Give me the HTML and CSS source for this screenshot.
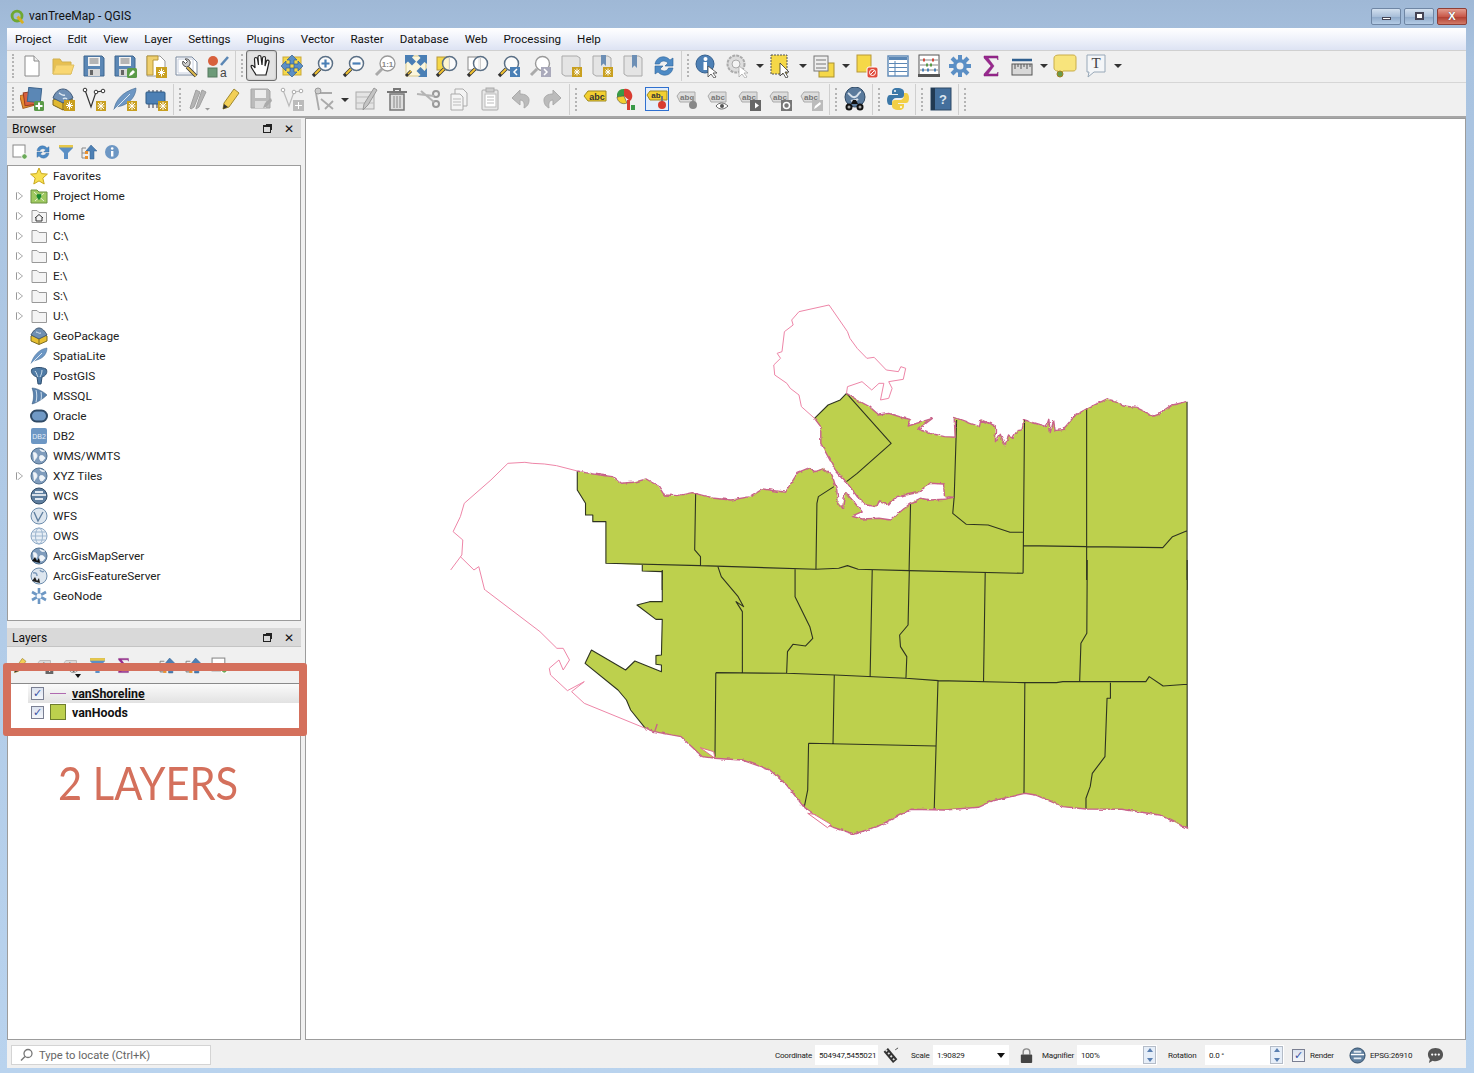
FILE: index.html
```html
<!DOCTYPE html>
<html lang="en">
<head>
<meta charset="utf-8">
<title>vanTreeMap - QGIS</title>
<link rel="stylesheet" href="styles.css">
</head>
<body>
<svg class="defs" width="0" height="0" aria-hidden="true">
<defs>
<filter id="rough" x="-5%" y="-5%" width="110%" height="110%"><feTurbulence type="fractalNoise" baseFrequency=".07" numOctaves="3" seed="4"/><feDisplacementMap in="SourceGraphic" scale="9" xChannelSelector="R" yChannelSelector="G"/></filter>
<symbol id="mag" viewBox="0 0 24 24"><path d="M9 15L2 22" stroke="#333" stroke-width="3.400"/><path d="M9 15L4 20" stroke="#f2c230" stroke-width="2"/><circle cx="14.500" cy="9.500" r="7" fill="#fff" fill-opacity=".75" stroke="#5a6f85" stroke-width="1.500"/></symbol>
<symbol id="new" viewBox="0 0 24 24"><path d="M5 2h9l5 5v15H5z" fill="#fff" stroke="#8a8a8a"/><path d="M14 2v5h5" fill="#eee" stroke="#8a8a8a"/></symbol>
<symbol id="open" viewBox="0 0 24 24"><path d="M2 20V5h7l2 3h9v12z" fill="#e8c050" stroke="#d0b050"/><path d="M2 20l3-9h18l-3 9z" fill="#f9d772" stroke="#e0c060"/></symbol>
<symbol id="save" viewBox="0 0 24 24"><path d="M2 2h18l2 2v18H2z" fill="#5b87b5" stroke="#3f668f"/><rect x="6" y="3" width="12" height="9" fill="#f4f4f4"/><path d="M7.500 5h9M7.500 7h9M7.500 9h9" stroke="#777"/><rect x="6" y="15" width="12" height="7" fill="#d8d8d8"/><rect x="8" y="16" width="3" height="5" fill="#666"/></symbol>
<symbol id="saveas" viewBox="0 0 24 24"><use href="#save"/><rect x="14" y="14" width="10" height="10" rx="1.500" fill="#5a9a48"/><path d="M16 22l1-3 3-3 2 2-3 3z" fill="#fff"/></symbol>
<symbol id="layout" viewBox="0 0 24 24"><path d="M3 2h13l5 5v15H3z" fill="#fff" stroke="#999"/><path d="M3 2h11v4H9v15H3z" fill="#efd070" stroke="#b89838"/><rect x="12" y="13" width="11" height="11" fill="#c9a020"/><path d="M17.500 14.500v8M14 18.500h7M15 16l5 5M20 16l-5 5" stroke="#fff"/></symbol>
<symbol id="mgr" viewBox="0 0 24 24"><path d="M1 3h16l5 5v13H1z" fill="#fff" stroke="#7a8aa0"/><path d="M3 5h15v14H3z" fill="none" stroke="#c8d0e0"/><path d="M21 22l-9-9" stroke="#333" stroke-width="3.500"/><path d="M21 22l-9-9" stroke="#e0bc50" stroke-width="2"/><path d="M14 12a4 4 0 0 1-6-5l2.500 2.500 2-2L10 5a4 4 0 0 1 5 5z" fill="#ccc" stroke="#555"/></symbol>
<symbol id="style" viewBox="0 0 24 24"><circle cx="7" cy="7" r="5" fill="#d8603c"/><rect x="2" y="14" width="9" height="9" fill="#6c9a78" stroke="#54785e"/><path d="M15 11l7-8" stroke="#5b87b5" stroke-width="2.500"/><text x="14" y="23" font-family="Liberation Sans,sans-serif" font-size="12" fill="#444">a</text></symbol>
<symbol id="hand" viewBox="0 0 24 24"><path d="M7 21C5 17 2 14 2 12c1-1.500 3 0 4 2L5.500 5c0-2 2.500-2 3 0l1 6-.5-8c0-2 3-2 3 0l1 8 .5-7c.5-2 3-2 3 0l-.5 8 1.500-5c.5-1.500 3-1 2.500 1l-2 9c-.5 2-1 3-1 4z" fill="#fff" stroke="#222" stroke-width="1.200"/></symbol>
<symbol id="pan" viewBox="0 0 24 24"><rect x="3" y="3" width="18" height="18" fill="#f5d848" stroke="#c9a838"/><path d="M12 1l5 5h-3v4h-4V6H7zM12 23l5-5h-3v-4h-4v4H7zM1 12l5-5v3h4v4H6v3zM23 12l-5-5v3h-4v4h4v3z" fill="#5b8fc5" stroke="#35608f" stroke-width=".7"/></symbol>
<symbol id="zin" viewBox="0 0 24 24"><use href="#mag"/><path d="M10.500 9.500h8M14.500 5.500v8" stroke="#4a7fb5" stroke-width="2.200"/></symbol>
<symbol id="zout" viewBox="0 0 24 24"><use href="#mag"/><path d="M10.500 9.500h8" stroke="#4a7fb5" stroke-width="2.200"/></symbol>
<symbol id="z11" viewBox="0 0 24 24"><path d="M9 15L3 21" stroke="#aaa" stroke-width="3"/><circle cx="14.500" cy="9.500" r="7.500" fill="#fff" stroke="#999" stroke-width="1.300"/><text x="14.500" y="12.500" text-anchor="middle" font-family="Liberation Sans,sans-serif" font-weight="bold" font-size="8" fill="#888">1:1</text></symbol>
<symbol id="zfull" viewBox="0 0 24 24"><rect x="2" y="2" width="20" height="20" fill="#fbf6dc" stroke="#d8c888"/><path d="M1 1h9L8 3.500l4 4-4 4-4-4L1 10zM23 1v9l-2.500-2-4 4-4-4 4-4L14 1zM23 23h-9l2.500-2-4-4 4-4 4 4 2.500-3z" fill="#4a7fb5"/><path d="M7 17l-5 5" stroke="#333" stroke-width="3"/><path d="M7 17l-3 3" stroke="#f2c230" stroke-width="1.500"/></symbol>
<symbol id="zlayer" viewBox="0 0 24 24"><rect x="2" y="3" width="12" height="13" fill="#f5d848" stroke="#b89838"/><use href="#mag"/><path d="M14.500 3v13" stroke="#ccc"/></symbol>
<symbol id="zsel" viewBox="0 0 24 24"><rect x="2" y="3" width="11" height="13" fill="#fff" stroke="#888"/><use href="#mag"/><path d="M14.500 3v13" stroke="#ccc"/></symbol>
<symbol id="zlast" viewBox="0 0 24 24"><use href="#mag"/><rect x="13" y="13" width="10" height="10" fill="#4a7fb5"/><path d="M20 15l-3 3 3 3" fill="none" stroke="#fff" stroke-width="1.500"/></symbol>
<symbol id="znext" viewBox="0 0 24 24"><path d="M9 15L3 21" stroke="#aaa" stroke-width="3"/><circle cx="14.500" cy="9.500" r="7" fill="#fff" stroke="#999" stroke-width="1.400"/><rect x="13" y="13" width="10" height="10" fill="#aab"/><path d="M16 15l3 3-3 3" fill="none" stroke="#fff" stroke-width="1.500"/></symbol>
<symbol id="bm" viewBox="0 0 24 24"><path d="M3 2h15l3 2v18H6l-3-2z" fill="#e4e4e4" stroke="#aaa"/><rect x="13" y="13" width="10" height="10" fill="#c9a020"/><path d="M18 14.500v7M15 18h6M15.500 15.500l5 5M20.500 15.500l-5 5" stroke="#fff"/></symbol>
<symbol id="bm2" viewBox="0 0 24 24"><path d="M3 2h15l3 2v18H6l-3-2z" fill="#e4e4e4" stroke="#aaa"/><path d="M11 1h5v11l-2.500-2.500L11 12z" fill="#6d8fb5"/><rect x="13" y="13" width="10" height="10" fill="#c9a020"/><path d="M18 14.500v7M15 18h6M15.500 15.500l5 5M20.500 15.500l-5 5" stroke="#fff"/></symbol>
<symbol id="bm3" viewBox="0 0 24 24"><path d="M3 2h15l3 2v18H6l-3-2z" fill="#e4e4e4" stroke="#aaa"/><path d="M11 1h5v13l-2.500-2.500L11 14z" fill="#6d8fb5"/></symbol>
<symbol id="refresh" viewBox="0 0 24 24"><path d="M3 10C4 5 8 2 13 3c2.500.5 4 2 5 3l3-2v8h-8l3-3c-2-2.500-7-3-8.500 1z" fill="#4d8ac5" stroke="#2e6399" stroke-width=".6"/><path d="M21 14c-1 5-5 8-10 7-2.500-.5-4-2-5-3l-3 2v-8h8l-3 3c2 2.500 7 3 8.500-1z" fill="#4d8ac5" stroke="#2e6399" stroke-width=".6"/></symbol>
<symbol id="identify" viewBox="0 0 24 24"><circle cx="10" cy="10" r="9" fill="#4d80b5" stroke="#35608f"/><rect x="8.500" y="8" width="3.500" height="8" fill="#fff"/><circle cx="10.500" cy="5" r="2" fill="#fff"/><path d="M13 12v11l3-3 3 4 2-1-3-4h4z" fill="#fff" stroke="#444" stroke-width=".8"/></symbol>
<symbol id="action" viewBox="0 0 24 24"><circle cx="10" cy="10" r="8.500" fill="#ddd" stroke="#aaa" stroke-width="2" stroke-dasharray="3 1"/><circle cx="10" cy="10" r="4" fill="#f4f4f4" stroke="#aaa"/><path d="M13 12v11l3-3 3 4 2-1-3-4h4z" fill="#fff" stroke="#aaa" stroke-width=".8"/></symbol>
<symbol id="select" viewBox="0 0 24 24"><rect x="2" y="1" width="16" height="19" fill="#f5d848" stroke="#555" stroke-dasharray="2 1"/><path d="M11 9v13l3-3 3 5 2-1-3-5h4z" fill="#fff" stroke="#333" stroke-width=".8"/></symbol>
<symbol id="selform" viewBox="0 0 24 24"><rect x="7" y="9" width="15" height="14" fill="#f5d848" stroke="#a89030"/><rect x="2" y="2" width="14" height="15" fill="#eee" stroke="#777"/><path d="M4 6h10M4 10h10M4 14h10" stroke="#777"/></symbol>
<symbol id="desel" viewBox="0 0 24 24"><rect x="2" y="1" width="14" height="17" fill="#f5d848" stroke="#b89838"/><rect x="12" y="13" width="11" height="11" rx="2" fill="#e04b3c" stroke="#fff"/><circle cx="17.500" cy="18.500" r="3" fill="none" stroke="#fff"/><path d="M15.500 20.500l4-4" stroke="#fff"/></symbol>
<symbol id="table" viewBox="0 0 24 24"><rect x="2" y="2" width="20" height="20" fill="#fff" stroke="#5b87b5" stroke-width="1.400"/><path d="M3 4.500h18" stroke="#5b87b5" stroke-width="3"/><path d="M3 9.500h18M3 13.500h18M3 17.500h18M9 7v15" stroke="#5b87b5"/></symbol>
<symbol id="abacus" viewBox="0 0 24 24"><rect x="2" y="1" width="20" height="20" fill="#fff" stroke="#555"/><rect x="1" y="20" width="22" height="3" fill="#555"/><path d="M3 6h18M3 11h18M3 16h18" stroke="#888"/><path d="M6 6h2M15 6h2" stroke="#d04a3c" stroke-width="3"/><path d="M9 11h2M13 11h2" stroke="#5a9a48" stroke-width="3"/><path d="M5 16h2M10 16h2M17 16h2" stroke="#4a7fb5" stroke-width="3"/></symbol>
<symbol id="gear" viewBox="0 0 24 24"><path d="M12 1v22M1 12h22M4 4l16 16M20 4L4 20" stroke="#5b8fc5" stroke-width="4"/><circle cx="12" cy="12" r="7" fill="#5b8fc5"/><circle cx="12" cy="12" r="3.500" fill="#f0f0f0"/></symbol>
<symbol id="sum" viewBox="0 0 24 24"><path d="M19 2H5v2l7 8-7 8v2h14v-4l-1 2H9l6-8-6-8h9l1 2z" fill="#99288f" stroke="#7a1f72" stroke-width=".5"/></symbol>
<symbol id="measure" viewBox="0 0 24 24"><path d="M2 6h20" stroke="#2f5f8f" stroke-width="2.500"/><rect x="2" y="10" width="20" height="11" fill="#d8d8d8" stroke="#555"/><path d="M5 10v5M8 10v3M11 10v5M14 10v3M17 10v5M20 10v3" stroke="#555"/></symbol>
<symbol id="tip" viewBox="0 0 24 24"><path d="M6 1h14c2 0 3 1 3 3v10c0 2-1 3-3 3H10l-4 6-1-6c-2 0-4-1-4-3V4c0-2 2-3 5-3z" fill="#f8e47c" stroke="#c9ad48"/><circle cx="7" cy="20" r="3" fill="#6a9a4a" stroke="#a08020"/></symbol>
<symbol id="tbox" viewBox="0 0 24 24"><path d="M3 1h18v17H10l-6 5 1-5H3z" fill="#f4f6f8" stroke="#98a8b8"/><text x="12" y="14" text-anchor="middle" font-family="Liberation Serif,serif" font-size="15" fill="#444">T</text></symbol>
<symbol id="addlayer" viewBox="0 0 24 24"><rect x="1" y="7" width="13" height="13" transform="rotate(-15 7 13)" fill="#e89030" stroke="#a86020"/><rect x="4" y="5" width="13" height="13" transform="rotate(-8 10 11)" fill="#d86040" stroke="#983a20"/><rect x="8" y="1" width="13" height="14" transform="rotate(6 14 8)" fill="#5b87b5" stroke="#3f668f"/><rect x="14" y="14" width="10" height="10" rx="1.500" fill="#5a9a48"/><path d="M19 15.500v7M15.500 19h7" stroke="#fff" stroke-width="2"/></symbol>
<symbol id="gpkg" viewBox="0 0 24 24"><path d="M12 8l10 5v5l-10 5-10-5v-5z" fill="#e0b830" stroke="#7a6520"/><path d="M2 11c2-6 6-9 10-9s8 3 10 9l-10 5z" fill="#7090b5" stroke="#3f5a7a"/><path d="M8 6c2 1 3 3 6 2M12 12c1-1 3-1 4 0" stroke="#dfe9f3" stroke-width="1.500" fill="none"/><path d="M12 16v7" stroke="#7a6520"/></symbol>
<symbol id="gpkgnew" viewBox="0 0 24 24"><use href="#gpkg"/><rect x="13" y="13" width="11" height="11" fill="#c9a020"/><path d="M18.500 14.500v8M15 18.500h7M16 16l5 5M21 16l-5 5" stroke="#fff"/></symbol>
<symbol id="vnew" viewBox="0 0 24 24"><path d="M3 3l6 17 5-15 7-1" fill="none" stroke="#333" stroke-width="1.200"/><circle cx="3" cy="3" r="1.800" fill="#fff" stroke="#333"/><circle cx="14" cy="5" r="1.800" fill="#fff" stroke="#333"/><circle cx="21" cy="4" r="1.800" fill="#fff" stroke="#333"/><rect x="14" y="14" width="10" height="10" fill="#c9a020"/><path d="M19 15v8M15.500 19h7M16 16l6 6M22 16l-6 6" stroke="#fff"/></symbol>
<symbol id="feather" viewBox="0 0 24 24"><path d="M1 23c1-9 8-18 22-22 0 7-5 15-15 18l-5 1z" fill="#6d97c4" stroke="#3f668f" stroke-width=".6"/><path d="M1 23L17 7" stroke="#dfe9f3"/></symbol>
<symbol id="feathernew" viewBox="0 0 24 24"><use href="#feather"/><rect x="14" y="14" width="10" height="10" fill="#c9a020"/><path d="M19 15v8M15.500 19h7M16 16l6 6M22 16l-6 6" stroke="#fff"/></symbol>
<symbol id="chip" viewBox="0 0 24 24"><path d="M5 3v18M9 3v18M13 3v18M17 3v18" stroke="#334"/><rect x="2" y="5" width="19" height="12" rx="1" fill="#4d80b5" stroke="#2e5a85"/><rect x="14" y="14" width="10" height="10" fill="#c9a020"/><path d="M19 15v8M15.500 19h7M16 16l6 6M22 16l-6 6" stroke="#fff"/></symbol>
<symbol id="dpencils" viewBox="0 0 24 24"><path d="M3 21L9 3l4 2-6 15-3 2zM9 21L15 3l4 2-7 15-3 2z" fill="#b4b4b4" stroke="#a0a0a0"/><path d="M18 21h5l-2.500 2.500z" fill="#999"/></symbol>
<symbol id="pencil" viewBox="0 0 24 24"><path d="M5 22l1-6L16 2l5 4-10 14z" fill="#f2cf55" stroke="#a08a30"/><path d="M5 22l1-5 4 3z" fill="#333"/></symbol>
<symbol id="dsave" viewBox="0 0 24 24"><path d="M2 2h17l2 2v17H2z" fill="#bbb" stroke="#a5a5a5"/><rect x="6" y="3" width="11" height="8" fill="#eee"/><rect x="6" y="14" width="11" height="7" fill="#ddd"/><path d="M14 21l2-5 6-5 1 3-6 6z" fill="#aaa"/></symbol>
<symbol id="dvert" viewBox="0 0 24 24"><path d="M3 3l6 16 5-14 7-1" fill="none" stroke="#bbb" stroke-width="1.200"/><circle cx="3" cy="3" r="1.800" fill="#fff" stroke="#aaa"/><circle cx="14" cy="5" r="1.800" fill="#fff" stroke="#aaa"/><circle cx="21" cy="4" r="1.800" fill="#fff" stroke="#aaa"/><rect x="13" y="13" width="11" height="11" fill="#bbb"/><path d="M18.500 15v7M15 18.500h7" stroke="#fff"/></symbol>
<symbol id="dtools" viewBox="0 0 24 24"><path d="M5 6l3 17M8 6l13 0M10 12l12 10M14 22l8-8" stroke="#aaa" stroke-width="1.800" fill="none"/><circle cx="7" cy="4" r="3" fill="#ccc" stroke="#999"/></symbol>
<symbol id="dedit" viewBox="0 0 24 24"><rect x="2" y="5" width="18" height="17" fill="#e4e4e4" stroke="#aaa"/><path d="M2 10h18M2 16h18" stroke="#bbb"/><path d="M9 23l1-6L20 1l3 2-9 15z" fill="#c4c4c4" stroke="#999"/></symbol>
<symbol id="trash" viewBox="0 0 24 24"><path d="M2 5h20M9 5V2h6v3" stroke="#777" stroke-width="2" fill="none"/><path d="M5 7h14v16H5z" fill="#ddd" stroke="#777" stroke-width="1.500"/><path d="M9 9v12M12 9v12M15 9v12" stroke="#888"/></symbol>
<symbol id="cut" viewBox="0 0 24 24"><circle cx="20" cy="7" r="3" fill="none" stroke="#999" stroke-width="2"/><circle cx="20" cy="17" r="3" fill="none" stroke="#999" stroke-width="2"/><path d="M18 9L1 7M18 15L5 4" stroke="#b4b4b4" stroke-width="2"/></symbol>
<symbol id="copy" viewBox="0 0 24 24"><path d="M8 2h8l4 4v13H8z" fill="#f4f4f4" stroke="#aaa"/><path d="M4 7h9l3 3v13H4z" fill="#f4f4f4" stroke="#aaa"/><path d="M6 12h8M6 15h8M6 18h8" stroke="#bbb"/></symbol>
<symbol id="paste" viewBox="0 0 24 24"><rect x="4" y="3" width="16" height="20" rx="1" fill="#e8e8e8" stroke="#aaa"/><rect x="8" y="1" width="8" height="4" fill="#ccc" stroke="#aaa"/><rect x="7" y="7" width="11" height="13" fill="#fff" stroke="#bbb"/><path d="M9 10h7M9 13h7M9 16h7" stroke="#bbb"/></symbol>
<symbol id="undo" viewBox="0 0 24 24"><path d="M11 3L3 11l8 7v-5c3 0 5 2 4 8 4-2 5-5 5-8 0-4-4-6-9-6z" fill="#bbb" stroke="#aaa"/></symbol>
<symbol id="redo" viewBox="0 0 24 24"><path d="M13 3l8 8-8 7v-5c-3 0-5 2-4 8-4-2-5-5-5-8 0-4 4-6 9-6z" fill="#bbb" stroke="#aaa"/></symbol>
<symbol id="abc" viewBox="0 0 24 24"><path d="M1 9l4-5h18v10H5z" fill="#f2cf30" stroke="#a08a20"/><text x="14" y="12.500" text-anchor="middle" font-family="Liberation Sans,sans-serif" font-weight="bold" font-size="9" fill="#333">abc</text></symbol>
<symbol id="labpie" viewBox="0 0 24 24"><path d="M10 2a7 7 0 0 1 6 12L10 9z" fill="#d83c30"/><path d="M3 7a7 7 0 0 1 7-5v7l-7 1z" fill="#3a9a48"/><path d="M3 10l7-1 3 7a7 7 0 0 1-10-6z" fill="#f2cf30" stroke="#333" stroke-width=".5"/><rect x="13" y="13" width="3" height="10" fill="#d83c30"/><rect x="17" y="18" width="4" height="5" fill="#3a9a48"/></symbol>
<symbol id="labpin" viewBox="0 0 24 24"><rect x=".5" y=".5" width="23" height="23" fill="#e4eefa" stroke="#2f70d0"/><path d="M2 8l3-4h17v9H5z" fill="#f2cf30" stroke="#a08a20"/><text x="11" y="11" text-anchor="middle" font-family="Liberation Sans,sans-serif" font-weight="bold" font-size="8" fill="#333">ab</text><path d="M17 9v7" stroke="#777" stroke-width="2"/><circle cx="17" cy="18" r="4" fill="#d83c30"/></symbol>
<symbol id="gtag" viewBox="0 0 24 24"><path d="M1 9l3-4h15v10H4z" fill="#ddd" stroke="#aaa"/><text x="11" y="13" text-anchor="middle" font-family="Liberation Sans,sans-serif" font-weight="bold" font-size="8" fill="#777">abc</text></symbol>
<symbol id="lab1" viewBox="0 0 24 24"><use href="#gtag"/><path d="M17 9v7" stroke="#999" stroke-width="2"/><circle cx="17" cy="18" r="4" fill="#888"/></symbol>
<symbol id="lab2" viewBox="0 0 24 24"><use href="#gtag"/><path d="M9 19c3-4 8-4 12 0-4 4-9 4-12 0z" fill="#fff" stroke="#666"/><circle cx="15" cy="19" r="2" fill="#555"/></symbol>
<symbol id="lab3" viewBox="0 0 24 24"><use href="#gtag"/><rect x="12" y="13" width="11" height="11" fill="#666"/><path d="M14 18.500h3v-3l4 3-4 3v-3" fill="#fff"/></symbol>
<symbol id="lab4" viewBox="0 0 24 24"><use href="#gtag"/><rect x="12" y="13" width="11" height="11" fill="#777"/><circle cx="17.500" cy="18.500" r="3" fill="none" stroke="#fff" stroke-width="1.500"/></symbol>
<symbol id="lab5" viewBox="0 0 24 24"><use href="#gtag"/><rect x="12" y="13" width="11" height="11" fill="#bbb"/><path d="M14 22l1-3 5-4 1 2-5 4z" fill="#fff"/></symbol>
<symbol id="plugin" viewBox="0 0 24 24"><circle cx="12" cy="10" r="10" fill="#5a7a9c" stroke="#2f4a66"/><path d="M5 6c3 2 3 5 7 4s3-5 6-5M8 14c2-1 5 0 7-2" stroke="#d8e2ec" stroke-width="2" fill="none"/><circle cx="6" cy="20" r="3.500" fill="#111"/><circle cx="17" cy="20" r="3.500" fill="#111"/><path d="M8 17h7l-2-4h-3z" fill="#111"/><circle cx="6" cy="20" r="1.500" fill="#aaa"/><circle cx="17" cy="20" r="1.500" fill="#aaa"/></symbol>
<symbol id="python" viewBox="0 0 24 24"><path d="M11 1c-4 0-5 2-5 4v2h6v1H4c-2 0-3 2-3 5s1 5 3 5h2v-3c0-2 2-4 4-4h5c2 0 3-1 3-3V5c0-2-2-4-7-4z" fill="#3c78a8"/><circle cx="9" cy="4" r="1" fill="#fff"/><path d="M13 23c4 0 5-2 5-4v-2h-6v-1h8c2 0 3-2 3-5s-1-5-3-5h-2v3c0 2-2 4-4 4h-5c-2 0-3 1-3 3v3c0 2 2 4 7 4z" fill="#f2cf45"/><circle cx="15" cy="20" r="1" fill="#fff"/></symbol>
<symbol id="help" viewBox="0 0 24 24"><rect x="2" y="1" width="20" height="22" fill="#446f9c" stroke="#2f4a66"/><rect x="2" y="1" width="4" height="22" fill="#223a52"/><text x="14" y="17" text-anchor="middle" font-family="Liberation Sans,sans-serif" font-weight="bold" font-size="13" fill="#dce6f0">?</text></symbol>
<symbol id="badd" viewBox="0 0 16 16"><rect x="1" y="1" width="12" height="12" fill="#fff" stroke="#888"/><circle cx="12.500" cy="12.500" r="2.800" fill="#6aaa58" stroke="#fff"/></symbol>
<symbol id="bfilter" viewBox="0 0 16 16"><path d="M1 1h14v3L10 9v6H6V9L1 4z" fill="#5b8fc5"/><path d="M1 1h14v2.500H1z" fill="#e8c84a"/></symbol>
<symbol id="bcoll" viewBox="0 0 16 16"><path d="M9 1l6 6h-3v8H8V7H4z" fill="#4d80b5" stroke="#35608f" stroke-width=".5" transform="translate(1)"/><path d="M1 4h4M1 4v10M1 9h4M1 14h4" stroke="#888"/><rect x="4" y="7" width="3" height="3" fill="#e89030"/><rect x="4" y="12" width="3" height="3" fill="#e89030"/></symbol>
<symbol id="binfo" viewBox="0 0 16 16"><circle cx="8" cy="8" r="7" fill="#6d97c4"/><rect x="7" y="7" width="2.400" height="5.500" fill="#fff"/><circle cx="8.200" cy="4.500" r="1.300" fill="#fff"/></symbol>
<symbol id="star" viewBox="0 0 18 18"><path d="M9 1l2.400 5.600 6 .5-4.600 4 1.400 5.900L9 13.900 3.800 17l1.400-5.900-4.600-4 6-.5z" fill="#f8e050" stroke="#c9a820"/></symbol>
<symbol id="phome" viewBox="0 0 18 18"><path d="M1 3h6l2 2h8v11H1z" fill="#9ec860" stroke="#6a9040"/><path d="M4 5l10 9M14 6L5 14" stroke="#e8f0d0"/><path d="M9 13c-3-3-3-6-1-6 .6 0 1 .4 1 1 0-.6.500-1 1-1 2 0 2 3-1 6z" fill="#1a8a30"/></symbol>
<symbol id="folder" viewBox="0 0 18 18"><path d="M2 3.500h5l2 2h7.500v10H2z" fill="#f4f4f4" stroke="#999"/></symbol>
<symbol id="fhome" viewBox="0 0 18 18"><use href="#folder"/><path d="M5 11l4-3.500 4 3.500M6 10.500v3.500h6v-3.500" fill="none" stroke="#333"/></symbol>
<symbol id="tgpkg" viewBox="0 0 18 18"><path d="M9 6l8 3v5l-8 3.500L1 14V9z" fill="#e8c030" stroke="#7a6a20"/><path d="M1 8c2-4 5-7 8-7s6 3 8 7l-8 4z" fill="#6f8fb2" stroke="#40566f"/><path d="M6 5c2 0 3 2 5 1" stroke="#dfe9f3" fill="none"/><path d="M9 12v5" stroke="#7a6a20"/></symbol>
<symbol id="spatial" viewBox="0 0 18 18"><path d="M1 17C3 9 9 2 17 1c0 5-3 10-10 12l-3 1z" fill="#6d97c4" stroke="#40668f" stroke-width=".5"/><path d="M1 17L12 6" stroke="#dfe9f3"/></symbol>
<symbol id="postgis" viewBox="0 0 18 18"><path d="M2 2c4-2 10-2 14 0 2 3 0 7-4 8l-1 7H8L7 10C3 9 0 5 2 2z" fill="#4f7ba5" stroke="#2f4f70"/><path d="M5 4c2 2 2 5 3 6M12 3c0 3-1 5-2 7" stroke="#cfe0ee" fill="none"/></symbol>
<symbol id="mssql" viewBox="0 0 18 18"><path d="M2 1c5 0 12 4 15 7-3 3-10 8-15 9 2-5 2-11 0-16z" fill="#5a82ad" stroke="#37587a" stroke-width=".5"/><path d="M6 3c1 4 1 8 0 12M11 5c.5 3 .5 5 0 8" stroke="#cfe0ee" fill="none"/></symbol>
<symbol id="oracle" viewBox="0 0 18 18"><rect x="1" y="3.500" width="16" height="11" rx="5.500" fill="#7099c5" stroke="#2f4a66" stroke-width="2"/></symbol>
<symbol id="db2" viewBox="0 0 18 18"><rect x="1" y="1" width="16" height="16" rx="2" fill="#6d97c4"/><text x="9" y="12" text-anchor="middle" font-family="Liberation Sans,sans-serif" font-size="7" fill="#e6eef6">DB2</text></symbol>
<symbol id="globe" viewBox="0 0 18 18"><circle cx="9" cy="9" r="8" fill="#7f9cbc" stroke="#51708f"/><path d="M3 6c3-1 4 1 4 3s-2 3-3 5M10 2c0 2 3 3 5 2M10 9c2-1 4 0 5 2-1 2-3 3-4 3-1-1-2-3-1-5z" fill="#f0f4f8" stroke="#f0f4f8"/></symbol>
<symbol id="wcs" viewBox="0 0 18 18"><circle cx="9" cy="9" r="8" fill="#5f7f9f" stroke="#2f4a66"/><path d="M2 8h14" stroke="#fff" stroke-width="1.500"/><path d="M5 5h8M5 12h8" stroke="#e0e8f0" stroke-width="2"/></symbol>
<symbol id="wfs" viewBox="0 0 18 18"><circle cx="9" cy="9" r="8" fill="#dde6ef" stroke="#6d8dad"/><path d="M4 5l4 9 5-9" fill="none" stroke="#5f7f9f" stroke-width="1.400"/></symbol>
<symbol id="ows" viewBox="0 0 18 18"><circle cx="9" cy="9" r="8" fill="#e8eff6" stroke="#8ba7c4"/><ellipse cx="9" cy="9" rx="3.500" ry="8" fill="none" stroke="#9db6cf"/><path d="M1 9h16M2.500 5h13M2.500 13h13" stroke="#9db6cf"/></symbol>
<symbol id="arcmap" viewBox="0 0 18 18"><use href="#globe"/><path d="M2 14l3-4 2 4 2-3 1 5z" fill="#111"/></symbol>
<symbol id="arcfeat" viewBox="0 0 18 18"><circle cx="9" cy="9" r="8" fill="#dde6ef" stroke="#6d8dad"/><path d="M3 6c3-1 4 1 4 3M10 3c1 2 3 2 4 1" stroke="#7f9cbc" stroke-width="1.500" fill="none"/><path d="M2 14l3-4 2 4 2-3 1 5z" fill="#222"/></symbol>
<symbol id="geonode" viewBox="0 0 18 18"><path d="M9 1v16M2 5l14 8M16 5L2 13" stroke="#6d97c4" stroke-width="2.600"/><circle cx="9" cy="9" r="2.500" fill="#f4f8fc"/></symbol>
<symbol id="beetle" viewBox="0 0 18 18"><path d="M4 3l10 12" stroke="#333" stroke-width="6"/><path d="M4 3l10 12" stroke="#ddd" stroke-width="2" stroke-dasharray="2 2"/><path d="M14 3l3-2" stroke="#444"/></symbol>
<symbol id="lock" viewBox="0 0 18 18"><path d="M5.500 8V5c0-4 7-4 7 0v3" fill="none" stroke="#888" stroke-width="1.500"/><rect x="3" y="8" width="12" height="9" rx="1" fill="#444"/></symbol>
<symbol id="chat" viewBox="0 0 18 18"><path d="M9 1c5 0 8 3 8 7s-3 7-8 7c-1 0-2 0-3-.5L2 17l1-4C2 12 1 10 1 8c0-4 3-7 8-7z" fill="#555"/><circle cx="5.500" cy="8" r="1.200" fill="#fff"/><circle cx="9" cy="8" r="1.200" fill="#fff"/><circle cx="12.500" cy="8" r="1.200" fill="#fff"/></symbol>
<symbol id="qlogo" viewBox="0 0 16 16"><circle cx="7.500" cy="7.500" r="5.300" fill="none" stroke="#6fa832" stroke-width="3"/><path d="M8 8l6 7" stroke="#d8b020" stroke-width="3"/></symbol>
<symbol id="search" viewBox="0 0 14 14"><circle cx="8" cy="5.500" r="4" fill="none" stroke="#777" stroke-width="1.300"/><path d="M5 8.500l-4 4" stroke="#777" stroke-width="1.500"/></symbol>
</defs>
</svg>

<div class="win">
  <header class="titlebar">
    <svg class="qlogo"><use href="#qlogo"/></svg>
    <span class="title-text">vanTreeMap - QGIS</span>
    <div class="winbtns">
      <span class="wb"><i class="wb-min"></i></span>
      <span class="wb"><i class="wb-max"></i></span>
      <span class="wb wb-close">X</span>
    </div>
  </header>

  <div class="client">
    <nav class="menubar">
      <span>Project</span><span>Edit</span><span>View</span><span>Layer</span><span>Settings</span><span>Plugins</span><span>Vector</span><span>Raster</span><span>Database</span><span>Web</span><span>Processing</span><span>Help</span>
    </nav>

    <div class="toolrow row-one">
      <i class="grip"></i>
      <span class="tb"><svg class="ic"><use href="#new"/></svg></span>
      <span class="tb"><svg class="ic"><use href="#open"/></svg></span>
      <span class="tb"><svg class="ic"><use href="#save"/></svg></span>
      <span class="tb"><svg class="ic"><use href="#saveas"/></svg></span>
      <span class="tb"><svg class="ic"><use href="#layout"/></svg></span>
      <span class="tb"><svg class="ic"><use href="#mgr"/></svg></span>
      <span class="tb"><svg class="ic"><use href="#style"/></svg></span>
      <i class="sep"></i>
      <span class="tb tb-on"><svg class="ic"><use href="#hand"/></svg></span>
      <span class="tb"><svg class="ic"><use href="#pan"/></svg></span>
      <span class="tb"><svg class="ic"><use href="#zin"/></svg></span>
      <span class="tb"><svg class="ic"><use href="#zout"/></svg></span>
      <span class="tb"><svg class="ic"><use href="#z11"/></svg></span>
      <span class="tb"><svg class="ic"><use href="#zfull"/></svg></span>
      <span class="tb"><svg class="ic"><use href="#zlayer"/></svg></span>
      <span class="tb"><svg class="ic"><use href="#zsel"/></svg></span>
      <span class="tb"><svg class="ic"><use href="#zlast"/></svg></span>
      <span class="tb"><svg class="ic"><use href="#znext"/></svg></span>
      <span class="tb"><svg class="ic"><use href="#bm"/></svg></span>
      <span class="tb"><svg class="ic"><use href="#bm2"/></svg></span>
      <span class="tb"><svg class="ic"><use href="#bm3"/></svg></span>
      <span class="tb"><svg class="ic"><use href="#refresh"/></svg></span>
      <i class="sep"></i>
      <span class="tb"><svg class="ic"><use href="#identify"/></svg></span>
      <span class="tb"><svg class="ic"><use href="#action"/></svg></span><i class="drop"></i>
      <span class="tb"><svg class="ic"><use href="#select"/></svg></span><i class="drop"></i>
      <span class="tb"><svg class="ic"><use href="#selform"/></svg></span><i class="drop"></i>
      <span class="tb"><svg class="ic"><use href="#desel"/></svg></span>
      <span class="tb"><svg class="ic"><use href="#table"/></svg></span>
      <span class="tb"><svg class="ic"><use href="#abacus"/></svg></span>
      <span class="tb"><svg class="ic"><use href="#gear"/></svg></span>
      <span class="tb"><svg class="ic"><use href="#sum"/></svg></span>
      <span class="tb"><svg class="ic"><use href="#measure"/></svg></span><i class="drop"></i>
      <span class="tb"><svg class="ic"><use href="#tip"/></svg></span>
      <span class="tb"><svg class="ic"><use href="#tbox"/></svg></span><i class="drop"></i>
    </div>

    <div class="toolrow row-two">
      <i class="grip"></i>
      <span class="tb"><svg class="ic"><use href="#addlayer"/></svg></span>
      <span class="tb"><svg class="ic"><use href="#gpkgnew"/></svg></span>
      <span class="tb"><svg class="ic"><use href="#vnew"/></svg></span>
      <span class="tb"><svg class="ic"><use href="#feathernew"/></svg></span>
      <span class="tb"><svg class="ic"><use href="#chip"/></svg></span>
      <i class="sep"></i>
      <span class="tb"><svg class="ic"><use href="#dpencils"/></svg></span>
      <span class="tb"><svg class="ic"><use href="#pencil"/></svg></span>
      <span class="tb"><svg class="ic"><use href="#dsave"/></svg></span>
      <span class="tb"><svg class="ic"><use href="#dvert"/></svg></span>
      <span class="tb"><svg class="ic"><use href="#dtools"/></svg></span><i class="drop"></i>
      <span class="tb"><svg class="ic"><use href="#dedit"/></svg></span>
      <span class="tb"><svg class="ic"><use href="#trash"/></svg></span>
      <span class="tb"><svg class="ic"><use href="#cut"/></svg></span>
      <span class="tb"><svg class="ic"><use href="#copy"/></svg></span>
      <span class="tb"><svg class="ic"><use href="#paste"/></svg></span>
      <span class="tb"><svg class="ic"><use href="#undo"/></svg></span>
      <span class="tb"><svg class="ic"><use href="#redo"/></svg></span>
      <i class="sep"></i>
      <span class="tb"><svg class="ic"><use href="#abc"/></svg></span>
      <span class="tb"><svg class="ic"><use href="#labpie"/></svg></span>
      <span class="tb"><svg class="ic"><use href="#labpin"/></svg></span>
      <span class="tb"><svg class="ic"><use href="#lab1"/></svg></span>
      <span class="tb"><svg class="ic"><use href="#lab2"/></svg></span>
      <span class="tb"><svg class="ic"><use href="#lab3"/></svg></span>
      <span class="tb"><svg class="ic"><use href="#lab4"/></svg></span>
      <span class="tb"><svg class="ic"><use href="#lab5"/></svg></span>
      <i class="sep"></i>
      <span class="tb"><svg class="ic"><use href="#plugin"/></svg></span>
      <i class="sep"></i>
      <span class="tb"><svg class="ic"><use href="#python"/></svg></span>
      <i class="sep"></i>
      <span class="tb"><svg class="ic"><use href="#help"/></svg></span>
      <i class="sep"></i>
    </div>

    <main class="workspace">
      <aside class="docks">
        <section class="dock dock-browser">
          <div class="dock-title"><span>Browser</span><span class="dock-btns"><i class="dk-float"></i><b>✕</b></span></div>
          <div class="dock-tools">
            <svg class="bi"><use href="#badd"/></svg>
            <svg class="bi"><use href="#refresh"/></svg>
            <svg class="bi"><use href="#bfilter"/></svg>
            <svg class="bi"><use href="#bcoll"/></svg>
            <svg class="bi"><use href="#binfo"/></svg>
          </div>
          <ul class="tree">
            <li><i class="tw tw-none"></i><svg class="ti"><use href="#star"/></svg>Favorites</li>
            <li><i class="tw"></i><svg class="ti"><use href="#phome"/></svg>Project Home</li>
            <li><i class="tw"></i><svg class="ti"><use href="#fhome"/></svg>Home</li>
            <li><i class="tw"></i><svg class="ti"><use href="#folder"/></svg>C:\</li>
            <li><i class="tw"></i><svg class="ti"><use href="#folder"/></svg>D:\</li>
            <li><i class="tw"></i><svg class="ti"><use href="#folder"/></svg>E:\</li>
            <li><i class="tw"></i><svg class="ti"><use href="#folder"/></svg>S:\</li>
            <li><i class="tw"></i><svg class="ti"><use href="#folder"/></svg>U:\</li>
            <li><i class="tw tw-none"></i><svg class="ti"><use href="#tgpkg"/></svg>GeoPackage</li>
            <li><i class="tw tw-none"></i><svg class="ti"><use href="#spatial"/></svg>SpatiaLite</li>
            <li><i class="tw tw-none"></i><svg class="ti"><use href="#postgis"/></svg>PostGIS</li>
            <li><i class="tw tw-none"></i><svg class="ti"><use href="#mssql"/></svg>MSSQL</li>
            <li><i class="tw tw-none"></i><svg class="ti"><use href="#oracle"/></svg>Oracle</li>
            <li><i class="tw tw-none"></i><svg class="ti"><use href="#db2"/></svg>DB2</li>
            <li><i class="tw tw-none"></i><svg class="ti"><use href="#globe"/></svg>WMS/WMTS</li>
            <li><i class="tw"></i><svg class="ti"><use href="#globe"/></svg>XYZ Tiles</li>
            <li><i class="tw tw-none"></i><svg class="ti"><use href="#wcs"/></svg>WCS</li>
            <li><i class="tw tw-none"></i><svg class="ti"><use href="#wfs"/></svg>WFS</li>
            <li><i class="tw tw-none"></i><svg class="ti"><use href="#ows"/></svg>OWS</li>
            <li><i class="tw tw-none"></i><svg class="ti"><use href="#arcmap"/></svg>ArcGisMapServer</li>
            <li><i class="tw tw-none"></i><svg class="ti"><use href="#arcfeat"/></svg>ArcGisFeatureServer</li>
            <li><i class="tw tw-none"></i><svg class="ti"><use href="#geonode"/></svg>GeoNode</li>
          </ul>
        </section>

        <section class="dock dock-layers">
          <div class="dock-title"><span>Layers</span><span class="dock-btns"><i class="dk-float"></i><b>✕</b></span></div>
          <div class="layer-tools">
            <svg class="li"><use href="#pencil"/></svg>
            <svg class="li"><use href="#lab3"/></svg>
            <svg class="li"><use href="#lab2"/></svg>
            <svg class="li"><use href="#bfilter"/></svg>
            <svg class="li li-s"><use href="#sum"/></svg>
            <svg class="li li-gap"><use href="#bcoll"/></svg>
            <svg class="li"><use href="#bcoll"/></svg>
            <svg class="li"><use href="#badd"/></svg>
            <i class="vis-drop"></i>
          </div>
          <div class="layer-list">
            <div class="layer layer-active"><i class="chk">✓</i><i class="sym-line"></i><span>vanShoreline</span></div>
            <div class="layer"><i class="chk">✓</i><i class="sym-fill"></i><span>vanHoods</span></div>
          </div>
          <div class="big-note">2 LAYERS</div>
        </section>
        <div class="callout"></div>
      </aside>

      <section class="canvas">
        <svg class="mapsvg" viewBox="306 119 1159 920" width="1159" height="920" role="img" aria-label="Map of Vancouver neighbourhoods">
          <g transform="translate(440 300) scale(.4851 .3333)">
            <path class="hood" d="M283 513L300 518 330 525 355 530 372 550 400 547 425 537 450 558 462 585 490 587 520 578 565 595 600 600 640 590 665 567 712 577 738 517 762 503 772 515 790 505 808 525 818 570 820 605 830 625 835 575 850 600 870 635 850 648 870 657 905 655 930 660 945 640 970 610 990 595 1010 600 1040 598 1058 592 1040 590 1038 552 1010 550 985 578 960 585 940 590 925 615 905 605 900 620 880 615 860 590 840 550 815 510 785 430 785 380 772 355 800 315 825 300 838 280 860 300 885 320 905 345 925 340 970 360 965 378 1015 355 985 388 1010 400 1040 410 1062 412 1060 352 1112 380 1115 360 1145 378 1145 425 1155 403 1165 437 1172 405 1180 415 1190 392 1200 390 1203 360 1250 380 1255 358 1258 398 1265 362 1268 392 1285 388 1310 345 1335 325 1375 297 1395 305 1410 318 1435 322 1470 348 1485 340 1510 315 1540 305L1540 870 458 870 458 815 417 813 417 795 342 790 342 665 315 665 315 645 300 645 300 610 283 570Z"/>
            <path class="bnd" d="M772 355L800 315 825 300 838 280M283 513L283 570 300 610 300 645 315 645 315 665 342 665 342 790 537 797 775 808 822 805 840 797 862 808 967 812 1202 820M417 795L417 813 458 815 458 870M527 580L525 750 537 770 537 797M812 560L780 590 777 610 775 808M970 612L967 810M1065 360L1060 590 1057 640 1085 673 1130 675 1175 697 1202 697M1205 360L1202 820M1333 325L1333 870M1203 737L1333 740 1490 743 1510 710 1540 692M1540 305L1540 870M838 280L930 430 860 520 838 545"/>
            <g class="rough">
            <path class="coast" d="M283 513L300 518 330 525 355 530 372 550 400 547 425 537 450 558 462 585 490 587 520 578 565 595 600 600 640 590 665 567 712 577 738 517 762 503 772 515 790 505 808 525 818 570 820 605 830 625 835 575 850 600 870 635 850 648 870 657 905 655 930 660 945 640 970 610 990 595 1010 600 1040 598 1058 592 1040 590 1038 552 1010 550 985 578 960 585 940 590 925 615 905 605 900 620 880 615 860 590 840 550 815 510 785 430 785 380 772 355M838 280L860 300 885 320 905 345 925 340 970 360 965 378 1015 355 985 388 1010 400 1040 410 1062 412 1060 352 1112 380 1115 360 1145 378 1145 425 1155 403 1165 437 1172 405 1180 415 1190 392 1200 390 1203 360 1250 380 1255 358 1258 398 1265 362 1268 392 1285 388 1310 345 1335 325 1375 297 1395 305 1410 318 1435 322 1470 348 1485 340 1510 315 1540 305"/>
            </g>
            <path class="shore" d="M838 280L840 260 870 245 890 270 905 250 915 250 908 300 925 295 932 265 925 245 955 238 960 205 950 200 945 215 920 210 895 172 880 175 860 145 845 115 840 95 802 15 740 35 725 60 728 75 710 95 705 155 695 160 702 175 688 195 690 225 715 250 722 265 740 285 745 320 772 355M283 513L240 497 215 492 190 490 175 487 140 490 105 540 50 610 42 650 27 695 47 720 45 765 22 810M42 770L70 810 80 800 92 870"/>
          </g>
          <g transform="translate(540 560) scale(.4216 .3333)">
            <path class="hood" d="M290 60L290 125 260 125 230 135 275 178 290 178 288 285 275 287 275 313 288 315 288 335 225 303 203 330 122 270 107 310 185 390 205 420 215 450 250 505 270 515 335 530 385 590 415 595 440 597 480 600 545 630 585 675 625 740 690 800 745 822 800 800 880 748 960 750 1040 742 1075 722 1150 700 1175 705 1240 740 1295 747 1380 748 1470 765 1535 805 1535 60Z"/>
            <path class="bnd" d="M290 30L290 125 260 125 230 135 275 178 290 178 288 285 275 287 275 313 288 315 288 335 225 303 203 330 122 270 107 310 185 390 205 420 215 450 250 505M422 20L430 50 470 110 483 140 465 125 480 155 480 338M605 28L605 110 640 200 647 235 630 258 600 253 587 275 585 340M788 30L783 350M876 30L873 195 853 225 855 260 870 290 868 355M1056 38L1052 365M1298 0L1297 220 1283 250 1280 365M417 338L585 340 700 345 868 355 945 362 1150 368 1225 368 1240 365 1437 365 1445 350 1478 378 1535 373M417 338L415 590M698 345L695 552M637 550L940 558M944 362L935 750M637 550L635 690 627 740M1150 368L1148 700M1353 368L1353 415 1345 415 1340 590 1310 640 1305 680 1295 715 1295 747M1535 0L1535 805"/>
            <path class="coast" d="M278 492L272 515"/>
            <path class="isle" d="M380 563L415 595 412 575Z"/>
            <g class="rough">
            <path class="coast" d="M250 505L270 515 335 530 385 590 415 595 440 597 480 600 545 630 585 675 625 740 690 800 745 822 800 800 880 748 960 750 1040 742 1075 722 1150 700 1175 705 1240 740 1295 747 1380 748 1470 765 1535 805"/>
            </g>
            <path class="shore" d="M-130 90L0 215 40 265 55 265 70 300 55 330 45 300 22 325 25 345 65 392 105 365 75 395 105 430 250 505"/>
            <path class="isle" d="M635 760L682 803 690 793 650 763Z"/>
          </g>
        </svg>
      </section>
    </main>

    <footer class="statusbar">
      <div class="locator"><svg class="search"><use href="#search"/></svg><span>Type to locate (Ctrl+K)</span></div>
      <span class="st st-coord">Coordinate</span>
      <span class="field f-coord">504947,5455021</span>
      <svg class="si si-beetle"><use href="#beetle"/></svg>
      <span class="st st-scale">Scale</span>
      <span class="field f-scale">1:90829<i class="combo"></i></span>
      <svg class="si si-lock"><use href="#lock"/></svg>
      <span class="st st-mag">Magnifier</span>
      <span class="field f-mag">100%<i class="spin"></i></span>
      <span class="st st-rot">Rotation</span>
      <span class="field f-rot">0.0 °<i class="spin"></i></span>
      <i class="chk chk-render">✓</i>
      <span class="st st-render">Render</span>
      <svg class="si si-globe"><use href="#wcs"/></svg>
      <span class="st st-epsg">EPSG:26910</span>
      <svg class="si si-chat"><use href="#chat"/></svg>
    </footer>
  </div>
</div>
</body>
</html>
```

FILE: styles.css
```css
* { box-sizing: border-box; }
html, body { margin: 0; padding: 0; }
body { font-family: Roboto, "Open Sans", sans-serif; color: #111; }
.defs { position: absolute; }
i { font-style: normal; }

.win {
  width: 1474px; height: 1073px; overflow: hidden;
  display: flex; flex-direction: column;
  background: linear-gradient(#9fb8d6 0, #a9c3e0 60px, #b9d3ee 100%);
}

.titlebar { height: 28px; flex: none; display: flex; align-items: center; padding: 4px 7px 0 10px; font-size: 12px; color: #111; }
.qlogo { width: 15px; height: 15px; margin-right: 4px; }
.title-text { line-height: 16px; }
.winbtns { margin-left: auto; display: flex; gap: 3px; }
.wb {
  width: 30px; height: 17px; border: 1px solid #6f86a4; border-radius: 2px;
  background: linear-gradient(#d3e0ef, #a9bfd9 50%, #8ea9c9 52%, #b5cce5);
  display: flex; align-items: center; justify-content: center;
}
.wb-min { width: 9px; height: 3px; background: #fff; border: 1px solid #445; margin-top: 5px; }
.wb-max { width: 9px; height: 8px; background: #fff; border: 2px solid #445; }
.wb-close {
  background: linear-gradient(#e39c8e, #c9594a 50%, #b03d2f 52%, #d27a68);
  border-color: #8f3f36; color: #fff; font: bold 11px "Liberation Sans", sans-serif;
  text-shadow: 0 0 1px #333;
}

.client { flex: 1; margin: 0 8px 5px 7px; display: flex; flex-direction: column; background: #f0f0f0; min-height: 0; }

.menubar {
  height: 23px; flex: none; display: flex; align-items: center; padding-left: 8px; gap: 16px;
  font-size: 11.600px; color: #111;
  background: linear-gradient(#fff 0, #f4f6fc 35%, #dde3f3 100%);
  border-bottom: 1px solid #d0d0d0;
}

.toolrow { display: flex; align-items: center; flex: none; padding-left: 5px; background: #f0f0f0; }
.row-one { height: 32px; padding-bottom: 2px; border-bottom: 1px solid #d6d6d6; }
.row-two { height: 35px; padding-bottom: 1px; border-bottom: 2px solid #a6a6a6; }
.grip { width: 4.500px; height: 24px; flex: none; border-left: 2px dotted #b4b4b4; }
.tb { width: 31px; height: 31px; flex: none; display: flex; align-items: center; justify-content: center; }
.tb-on { background: #e2e2e2; border: 1px solid #6e6e6e; border-radius: 3px; box-shadow: inset 0 0 2px #aaa; }
.ic { width: 24px; height: 24px; display: block; }
.drop { width: 12px; height: 31px; flex: none; position: relative; }
.drop::after { content: ""; position: absolute; left: 2px; top: 14px; border: 4px solid transparent; border-top: 4px solid #333; border-bottom: 0; }
.sep { width: 12px; height: 31px; flex: none; border-left: 1px solid #cfcfcf; position: relative; margin-left: 1px; margin-right: -1px; }
.sep::after { content: ""; position: absolute; left: 5px; top: 4px; height: 23px; border-left: 2px dotted #b4b4b4; }

.workspace { flex: 1; min-height: 0; display: flex; background: #f0f0f0; }
.docks { width: 294px; flex: none; display: flex; flex-direction: column; position: relative; }
.dock { display: flex; flex-direction: column; }
.dock-browser { height: 509px; padding-bottom: 6px; }
.dock-layers { flex: 1; min-height: 0; position: relative; }

.dock-title {
  height: 19px; flex: none; margin-top: 1px; padding: 1px 5px 0; display: flex; align-items: center; justify-content: space-between;
  font-size: 12px; background: #d9d9d9; border-bottom: 1px solid #c4c4c4;
}
.dock-btns { display: flex; align-items: center; gap: 12px; padding-right: 1px; }
.dk-float { width: 8px; height: 8px; border: 1px solid #222; border-top-width: 2px; box-shadow: 2px -2px 0 -1px #222; display: block; }
.dock-btns b { font: bold 12px "DejaVu Sans", sans-serif; width: 12px; text-align: center; }

.dock-tools { height: 27px; flex: none; display: flex; align-items: center; gap: 7px; padding: 0 0 0 5px; }
.bi { width: 16px; height: 16px; }

.tree { flex: 1; margin: 0; padding: 0; list-style: none; background: #fff; border: 1px solid #9c9c9c; }
.tree li { height: 20px; display: flex; align-items: center; font-size: 11.800px; color: #222; padding-left: 9px; }
.tw { width: 0; height: 0; flex: none; border-left: 5px solid #fff; border-top: 4px solid transparent; border-bottom: 4px solid transparent; margin-right: 8px; filter: drop-shadow(1px 0 0 #999) drop-shadow(-1px 0 0 #999); }
.tw-none { visibility: hidden; }
.ti { width: 18px; height: 18px; flex: none; margin-right: 5px; }

.layer-tools { height: 36px; flex: none; display: flex; align-items: center; gap: 9px; padding: 0 0 0 4px; position: relative; }
.li { width: 17px; height: 17px; }
.li-gap { margin-left: 18px; }
.vis-drop { position: absolute; left: 68px; bottom: 5px; border: 3px solid transparent; border-top: 4px solid #111; border-bottom: 0; }
.layer-list { flex: 1; min-height: 0; background: #fff; border: 1px solid #9c9c9c; border-top-color: #8a8a8a; }
.layer { height: 18px; display: flex; align-items: center; margin-left: 20px; padding-left: 3px; font-size: 12.400px; font-weight: 700; color: #111; gap: 6px; }
.layer-active { height: 19px; background: linear-gradient(#fafafa, #ededed 55%, #e2e2e2); }
.layer-active span { text-decoration: underline; }
.chk {
  width: 13px; height: 13px; flex: none; display: flex; align-items: center; justify-content: center;
  border: 1px solid #7a7f92; background: linear-gradient(#dbe2ef, #f4f6fa); color: #3a53a4;
  font: bold 11px "DejaVu Sans", sans-serif;
}
.sym-line { width: 16px; height: 1px; background: #b06ab0; flex: none; }
.sym-fill { width: 16px; height: 16px; background: #bdd04d; border: 1px solid #6e7d2e; flex: none; }

.big-note { position: absolute; left: 51px; top: 133px; font: 400 46px/1 Lato, sans-serif; color: #d4705c; white-space: nowrap; transform: scaleX(.905); transform-origin: left center; }
.callout { position: absolute; left: -4px; top: 545px; width: 304px; height: 73px; border: 8px solid #d4705c; border-radius: 3px; pointer-events: none; }

.canvas { width: 1161px; margin-left: 4px; background: #fff; border: 1px solid #9c9c9c; flex: none; }
.mapsvg { display: block; }
.hood { fill: #bdd04d; stroke: none; }
.bnd { fill: none; stroke: #2e3320; stroke-width: 1.100; vector-effect: non-scaling-stroke; stroke-linejoin: round; }
.coast { fill: none; stroke: #c8628a; stroke-width: 1.400; vector-effect: non-scaling-stroke; stroke-linejoin: round; }
.shore { fill: none; stroke: #ee86a8; stroke-width: 1; vector-effect: non-scaling-stroke; stroke-linejoin: round; }
.isle { fill: #fff; stroke: #e0708f; stroke-width: 1; vector-effect: non-scaling-stroke; }
.rough { filter: url(#rough); }

.statusbar { height: 28px; flex: none; display: flex; align-items: center; font-size: 8px; letter-spacing: -.2px; color: #222; background: #f0f0f0; padding: 2px 0 0 4px; }
.locator { width: 200px; height: 20px; flex: none; display: flex; align-items: center; gap: 5px; padding-left: 8px; background: #fff; border: 1px solid #d4d4d4; color: #666; font-size: 11.200px; letter-spacing: 0; }
.search { width: 14px; height: 14px; }
.st { flex: none; white-space: nowrap; }
.field { height: 20px; flex: none; display: flex; align-items: center; padding-left: 4px; background: #fff; position: relative; white-space: nowrap; }
.st-coord { margin-left: 564px; width: 40px; }
.f-coord { width: 63px; }
.si { width: 17px; height: 17px; flex: none; }
.si-beetle { margin-left: 4px; }
.st-scale { margin-left: 12px; width: 22px; }
.f-scale { width: 76px; }
.combo { position: absolute; right: 4px; top: 8px; border: 4px solid transparent; border-top: 5px solid #111; border-bottom: 0; }
.si-lock { margin-left: 9px; }
.st-mag { margin-left: 7px; width: 35px; }
.f-mag { width: 80px; }
.spin { position: absolute; right: 1px; top: 1px; width: 13px; height: 18px; background: linear-gradient(#e6eef8 49%, #98a 49%, #98a 51%, #e6eef8 51%); border: 1px solid #b4bcc8; }
.spin::before, .spin::after { content: ""; position: absolute; left: 2.500px; border: 3px solid transparent; }
.spin::before { top: 1px; border-top: 0; border-bottom: 4px solid #5a7fb0; }
.spin::after { bottom: 1px; border-bottom: 0; border-top: 4px solid #5a7fb0; }
.st-rot { margin-left: 11px; width: 37px; }
.f-rot { width: 79px; }
.chk-render { margin-left: 8px; }
.st-render { margin-left: 5px; width: 30px; }
.si-globe { margin-left: 9px; }
.st-epsg { margin-left: 4px; width: 55px; }
.si-chat { margin-left: 2px; }
```
